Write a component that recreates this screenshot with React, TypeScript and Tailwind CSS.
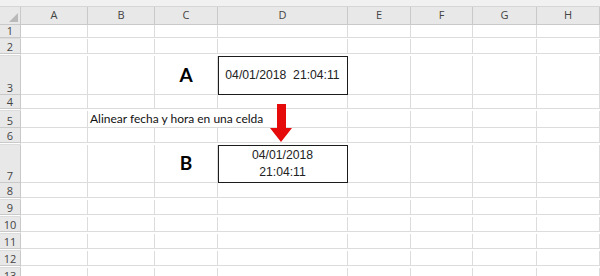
const cols = ["A", "B", "C", "D", "E", "F", "G", "H"];

// row heights in px (border included)
const rows = [
  { n: 1, h: "h-[14px]" },
  { n: 2, h: "h-[17px]" },
  { n: 3, h: "h-[39px]" },
  { n: 4, h: "h-[16px]" },
  { n: 5, h: "h-[17px]" },
  { n: 6, h: "h-[17px]" },
  { n: 7, h: "h-[38px]" },
  { n: 8, h: "h-[17px]" },
  { n: 9, h: "h-[17px]" },
  { n: 10, h: "h-[17px]" },
  { n: 11, h: "h-[17px]" },
  { n: 12, h: "h-[17px]" },
  { n: 13, h: "h-[17px]" },
];

const gridCols = "grid grid-cols-[21px_67px_67px_63px_130px_63px_62px_64px_1fr]";
const cell = "border-r border-b border-[#dcdcdc] bg-white";
const label = "font-['Lato','Open_Sans',sans-serif] text-[19px] font-bold text-black";
const date = "font-['Liberation_Sans',Arial,sans-serif] text-[12.2px] text-[#222]";

const RowHead = ({ n }: { n: number }) => (
  <div className="flex items-end justify-center border-r border-b border-[#c9c9c9] bg-[#e8e8e8] pb-px font-['Open_Sans',sans-serif] text-[11px] leading-none text-[#444]">
    {n}
  </div>
);

const Row = ({ n, h }: { n: number; h: string }) => {
  if (n === 3 || n === 7) {
    return (
      <div className={`${gridCols} ${h}`}>
        <RowHead n={n} />
        <div className={cell} />
        <div className={cell} />
        <div className={`${cell} flex items-center justify-center ${label}`}>{n === 3 ? "A" : "B"}</div>
        <div className={`${cell} flex items-center justify-center text-center outline outline-1 -outline-offset-1 outline-[#1c1c1c] ${date}`}>
          {n === 3 ? (
            <span className="whitespace-pre">04/01/2018  21:04:11</span>
          ) : (
            <span className="leading-[17px]">
              04/01/2018
              <br />
              21:04:11
            </span>
          )}
        </div>
        <div className={cell} />
        <div className={cell} />
        <div className={cell} />
        <div className={cell} />
      </div>
    );
  }
  if (n === 5) {
    return (
      <div className={`${gridCols} ${h}`}>
        <RowHead n={n} />
        <div className={cell} />
        <div className={`${cell} col-span-3 flex items-end pl-[2px] pb-[2px] font-['Lato',sans-serif] text-[12px] leading-none text-[#111] whitespace-nowrap`}>
          Alinear fecha y hora en una celda
        </div>
        <div className={cell} />
        <div className={cell} />
        <div className={cell} />
        <div className={cell} />
      </div>
    );
  }
  return (
    <div className={`${gridCols} ${h}`}>
      <RowHead n={n} />
      {cols.map((c) => (
        <div key={c} className={cell} />
      ))}
      <div className={cell} />
    </div>
  );
};

export default function App() {
  return (
    <div className="relative h-[276px] w-[600px] overflow-hidden bg-white">
      <div className="h-[7px] border-b border-[#d6d6d6] bg-[#f1f1f1]" />
      <div className={`${gridCols} h-[18px]`}>
        <div className="relative border-r border-b border-[#c9c9c9] bg-[#e8e8e8]">
          <svg className="absolute right-[2px] bottom-[2px]" width="9" height="9" viewBox="0 0 9 9">
            <path d="M9 0 V9 H0 Z" fill="#b9b9b9" />
          </svg>
        </div>
        {cols.map((c) => (
          <div
            key={c}
            className="flex items-center justify-center border-r border-b border-[#c9c9c9] bg-[#e8e8e8] font-['Open_Sans',sans-serif] text-[11px] text-[#444]"
          >
            {c}
          </div>
        ))}
        <div className="border-b border-[#c9c9c9] bg-[#e8e8e8]" />
      </div>
      {rows.map((r) => (
        <Row key={r.n} n={r.n} h={r.h} />
      ))}

      {/* arrow between the two cells */}
      <svg className="absolute left-[270px] top-[104px]" width="22" height="38" viewBox="0 0 22 38">
        <path d="M7 0 H16 V24 H22 L11 38 L0 24 H7 Z" fill="#e50b0b" />
      </svg>
    </div>
  );
}
